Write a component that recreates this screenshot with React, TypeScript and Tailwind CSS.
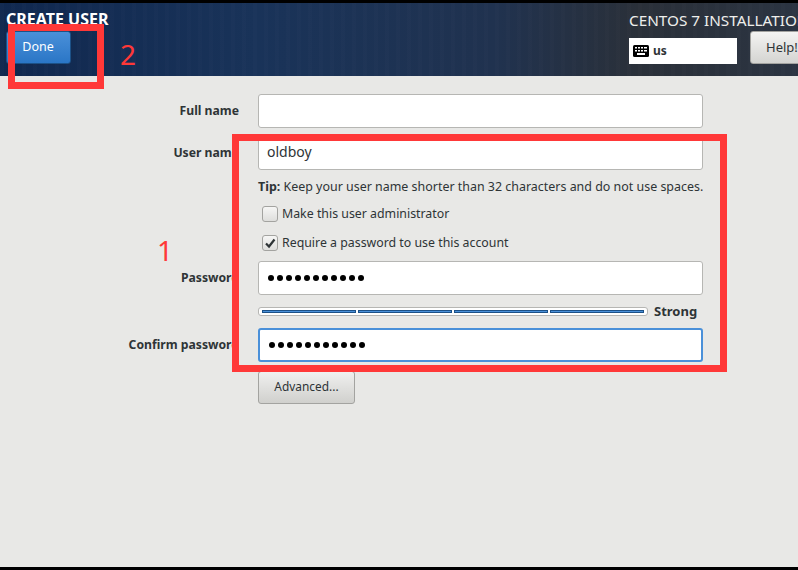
const labelClass = "w-[239px] shrink-0 text-right text-[12.2px] font-bold text-[#2e3436]";
const inputClass = "h-[34px] w-[445px] rounded-[3px] border border-[#b6b6b3] bg-white px-[8px] text-[14px] text-[#2e3436]";

function Dots() {
  return (
    <div className="flex h-full items-center gap-[3.05px] pl-[1px]">
      {Array.from({ length: 11 }).map((_, i) => (
        <span key={i} className="h-[6px] w-[6px] rounded-full bg-black" />
      ))}
    </div>
  );
}

function KeyboardIcon() {
  return (
    <svg width="16" height="12" viewBox="0 0 16 12">
      <rect x="0" y="0" width="16" height="12" rx="1.5" fill="#000" />
      <g fill="#fff">
        <rect x="2" y="2" width="2" height="1.5" />
        <rect x="5" y="2" width="2" height="1.5" />
        <rect x="8" y="2" width="2" height="1.5" />
        <rect x="11" y="2" width="3" height="1.5" />
        <rect x="2" y="5" width="2" height="1.5" />
        <rect x="5" y="5" width="2" height="1.5" />
        <rect x="8" y="5" width="2" height="1.5" />
        <rect x="11" y="5" width="3" height="1.5" />
        <rect x="4" y="8" width="8" height="2" />
      </g>
    </svg>
  );
}

function Checkbox({ checked, label }: { checked?: boolean; label: string }) {
  return (
    <div className="flex h-[16px] items-center pl-[4px] text-[12.35px] text-[#2e3436]">
      <span className="mr-[4px] flex h-[16px] w-[16px] items-center justify-center rounded-[3px] border border-[#a3a3a0] bg-gradient-to-b from-[#f6f6f5] to-[#dededc]">
        {checked && (
          <svg width="12" height="12" viewBox="0 0 12 12">
            <path d="M2 6.5 L5 9.5 L10.5 2.5" fill="none" stroke="#2e3436" strokeWidth="2.2" />
          </svg>
        )}
      </span>
      {label}
    </div>
  );
}

export default function App() {
  return (
    <div className="relative flex h-[570px] w-[798px] flex-col overflow-hidden border-y-[3px] border-black bg-[#e8e8e6] font-['Noto_Sans',sans-serif]">
      <header className="relative flex h-[73px] shrink-0 justify-between bg-[repeating-linear-gradient(90deg,rgba(255,255,255,0.012)_0,rgba(255,255,255,0.012)_4px,transparent_4px,transparent_11px),linear-gradient(90deg,#10284f,#193359_32%,#20324f_62%,#2a3039_80%,#2b3442)]">
        <div className="pl-[6px] pt-[7px]">
          <div className="text-[16px] leading-[18px] font-bold text-white">CREATE USER</div>
          <button className="mt-[3px] h-[33px] w-[65px] rounded-[3px] border border-[#1c5187] bg-gradient-to-b from-[#4a90d9] to-[#2a76c6] pr-[1px] text-[12.5px] text-white">
            Done
          </button>
        </div>
        <div className="w-[169px] shrink-0 overflow-hidden pt-[8px] whitespace-nowrap">
          <div className="text-[15.3px] leading-[18px] text-[#eeeeec]">CENTOS 7 INSTALLATION</div>
          <div className="mt-[9px] flex items-start">
            <div className="flex h-[26px] w-[108px] shrink-0 items-center gap-[4px] bg-white pl-[4px] text-[12px] font-bold text-[#2e3436]">
              <KeyboardIcon />
              us
            </div>
            <button className="mt-[-7px] ml-[13px] h-[33px] w-[60px] shrink-0 rounded-[3px] border border-[#a3a3a0] bg-gradient-to-b from-[#f4f4f3] to-[#d4d4d1] pl-[15px] text-left text-[13px] text-[#2e3436]">
              Help!
            </button>
          </div>
        </div>
      </header>

      <main className="flex flex-col pt-[18px]">
        <div className="flex items-center gap-[19px]">
          <label className={labelClass}>Full name</label>
          <div className={inputClass} />
        </div>
        <div className="mt-[8px] flex items-center gap-[19px]">
          <label className={labelClass}>User name</label>
          <div className={inputClass + " flex items-center pb-[3px]"}>oldboy</div>
        </div>
        <div className="mt-[8px] ml-[258px] text-[12.45px] leading-[17px] whitespace-nowrap text-[#2e3436]">
          <b>Tip:</b> Keep your user name shorter than 32 characters and do not use spaces.
        </div>
        <div className="mt-[11px] ml-[258px] flex flex-col gap-[13px]">
          <Checkbox label="Make this user administrator" />
          <Checkbox checked label="Require a password to use this account" />
        </div>
        <div className="mt-[10px] flex items-center gap-[19px]">
          <label className={labelClass}>Password</label>
          <div className={inputClass}>
            <Dots />
          </div>
        </div>
        <div className="mt-[12px] ml-[258px] flex items-center">
          <div className="flex h-[9px] w-[390px] gap-[2px] rounded-[3px] border border-[#b6b6b3] bg-white px-[3px] py-[2px]">
            <span className="flex-1 border border-[#1c5187] bg-[#4a90d9]" />
            <span className="flex-1 border border-[#1c5187] bg-[#4a90d9]" />
            <span className="flex-1 border border-[#1c5187] bg-[#4a90d9]" />
            <span className="flex-1 border border-[#1c5187] bg-[#4a90d9]" />
          </div>
          <span className="ml-[6px] text-[13px] leading-[9px] font-bold text-[#2e3436]">Strong</span>
        </div>
        <div className="mt-[12px] flex items-center gap-[19px]">
          <label className={labelClass}>Confirm password</label>
          <div className="h-[34px] w-[445px] rounded-[3px] border-2 border-[#4a90d9] bg-white px-[8px]">
            <Dots />
          </div>
        </div>
        <button className="mt-[9px] ml-[258px] h-[33px] w-[97px] rounded-[3px] border border-[#a3a3a0] bg-gradient-to-b from-[#f0f0ef] to-[#d0d0cd] pb-[2px] text-[11.9px] text-[#2e3436]">
          Advanced...
        </button>
      </main>

      {/* red annotations drawn over the screenshot */}
      <div className="absolute top-[131px] left-[232px] h-[238px] w-[495px] border-[7px] border-[#ff3838]" />
      <div className="absolute top-[21px] left-[8px] h-[65px] w-[96px] border-[7px] border-[#ff3838]" />
      <span className="absolute top-[33px] left-[120px] text-[28px] leading-[36px] text-[#ff3838]">2</span>
      <span className="absolute top-[229px] left-[157px] text-[28px] leading-[36px] text-[#ff3838]">1</span>
    </div>
  );
}
